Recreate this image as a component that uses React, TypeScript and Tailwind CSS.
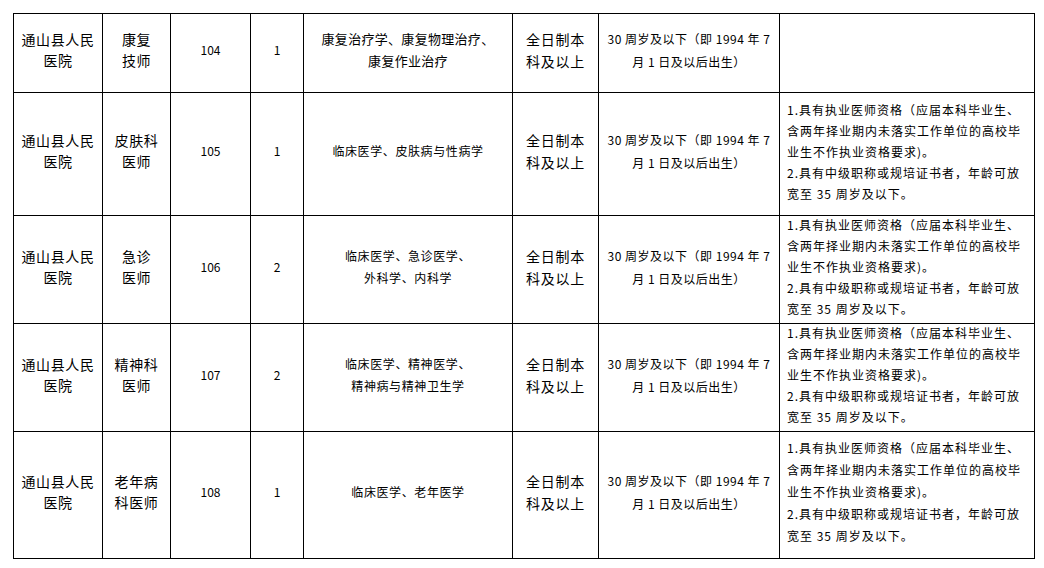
import React from 'react'

type Row = {
  h: string
  dept: string[]
  no: string
  n: string
  major: string[]
  majorBig?: boolean
  req: string[]
  reqLead: string
}

const note = [
  '1.具有执业医师资格（应届本科毕业生、',
  '含两年择业期内未落实工作单位的高校毕',
  '业生不作执业资格要求)。',
  '2.具有中级职称或规培证书者，年龄可放',
  '宽至 35 周岁及以下。',
]

const rows: Row[] = [
  { h: 'h-[79px]', dept: ['康复', '技师'], no: '104', n: '1', major: ['康复治疗学、康复物理治疗、', '康复作业治疗'], majorBig: true, req: [], reqLead: 'leading-[21px]' },
  { h: 'h-[123px]', dept: ['皮肤科', '医师'], no: '105', n: '1', major: ['临床医学、皮肤病与性病学'], req: note, reqLead: 'leading-[21px]' },
  { h: 'h-[108px]', dept: ['急诊', '医师'], no: '106', n: '2', major: ['临床医学、急诊医学、', '外科学、内科学'], req: note, reqLead: 'leading-[21px]' },
  { h: 'h-[108px]', dept: ['精神科', '医师'], no: '107', n: '2', major: ['临床医学、精神医学、', '精神病与精神卫生学'], req: note, reqLead: 'leading-[21px]' },
  { h: 'h-[127px]', dept: ['老年病', '科医师'], no: '108', n: '1', major: ['临床医学、老年医学'], req: note, reqLead: 'leading-[22px]' },
]

const cell = 'border border-black align-middle text-center p-0'

// negative top margin nudges the centred text block up ~3px without growing the row
function Lines({ items }: { items: string[] }) {
  return <div className="-mt-[6px]">{items.map((t, i) => <div key={i} className="whitespace-nowrap">{t}</div>)}</div>
}

export default function App() {
  return (
    <div className="min-h-[568px] w-[1044px] bg-white pl-[13px] pt-[13px] text-black" style={{ fontFamily: '"Noto Sans CJK SC", "Noto Sans", sans-serif' }}>
      <table className="table-fixed border-collapse w-[1021px]">
        <colgroup>
          <col className="w-[89px]" />
          <col className="w-[68px]" />
          <col className="w-[80px]" />
          <col className="w-[53px]" />
          <col className="w-[209px]" />
          <col className="w-[86px]" />
          <col className="w-[181px]" />
          <col className="w-[255px]" />
        </colgroup>
        <tbody>
          {rows.map(r => (
            <tr key={r.no} className={r.h}>
              <td className={`${cell} text-[14px] leading-[21px] tracking-[0.6px]`}><Lines items={['通山县人民', '医院']} /></td>
              <td className={`${cell} text-[14px] leading-[21px] tracking-[0.6px]`}><Lines items={r.dept} /></td>
              <td className={`${cell} text-[12px]`}><Lines items={[r.no]} /></td>
              <td className={`${cell} text-[12px]`}><Lines items={[r.n]} /></td>
              <td className={`${cell} ${r.majorBig ? 'text-[13px] leading-[22px] tracking-[0.3px]' : 'text-[12px] leading-[22px] tracking-[0.6px]'}`}><Lines items={r.major} /></td>
              <td className={`${cell} text-[14px] leading-[22px] tracking-[0.8px]`}><Lines items={['全日制本', '科及以上']} /></td>
              <td className={`${cell} text-[12px] leading-[23px] tracking-[0.5px]`}><Lines items={['30 周岁及以下（即 1994 年 7', '月 1 日及以后出生）']} /></td>
              <td className={`${cell} text-left pl-[7px] text-[12px] ${r.reqLead} tracking-[1px]`}>{r.req.length > 0 && <Lines items={r.req} />}</td>
            </tr>
          ))}
        </tbody>
      </table>
    </div>
  )
}
